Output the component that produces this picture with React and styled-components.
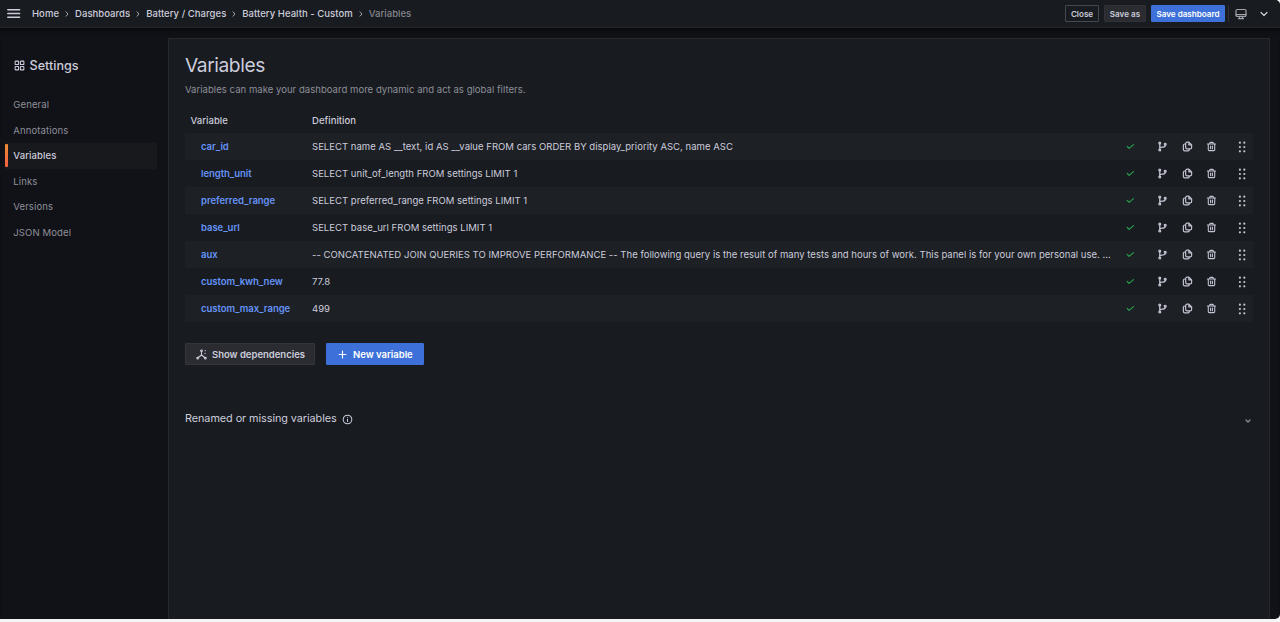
import styled, { createGlobalStyle } from "styled-components";

const GlobalStyle = createGlobalStyle`
  * {
    box-sizing: border-box;
  }
  body {
    margin: 0;
    background: #f4f5f5;
    overflow: hidden;
    font-family: "Inter", sans-serif;
    font-size: 9.52px;
    letter-spacing: 0.004em;
    color: #ccccdc;
  }
`;

const Page = styled.div`
  height: 619px;
  display: flex;
  flex-direction: column;
  overflow: hidden;
  border-radius: 0 5px 5px 0;
  background: #111217;
`;

const TopBar = styled.header`
  height: 28px;
  flex: none;
  display: flex;
  align-items: center;
  padding: 0 10px 0 6px;
  background: #181b1f;
  border-bottom: 1px solid #25272c;
`;

const Icon = styled.svg`
  display: block;
  flex: none;
  width: ${(props) => props.$size || 11}px;
  height: ${(props) => props.$size || 11}px;
  fill: none;
  stroke: currentColor;
  stroke-width: ${(props) => props.$stroke || 2};
  stroke-linecap: round;
  stroke-linejoin: round;
`;

const Crumbs = styled.nav`
  display: flex;
  align-items: center;
  margin-left: 11px;
  font-weight: 500;
  white-space: nowrap;
`;

const Crumb = styled.span`
  display: flex;
  align-items: center;
  color: ${(props) => (props.$current ? "#84858f" : "#ccccdc")};
`;

const Separator = styled(Icon)`
  margin: 1px 4px 0;
  color: #a2a3ae;
`;

const Actions = styled.div`
  display: flex;
  align-items: center;
  margin-left: auto;
`;

const SmallButton = styled.button`
  height: 17px;
  width: ${(props) => props.$width}px;
  margin-right: 5px;
  padding: 0;
  font: 600 8.1px "Inter", sans-serif;
  letter-spacing: 0;
  white-space: nowrap;
  border-radius: 1px;
  color: ${(props) => (props.$kind === "primary" ? "#fff" : "#ccccdc")};
  background: ${(props) =>
    ({ primary: "#3d71d9", secondary: "#2b2c31" })[props.$kind] ||
    "transparent"};
  border: 1px solid
    ${(props) =>
      ({ primary: "#3d71d9", secondary: "#313238" })[props.$kind] || "#46484f"};
`;

const Divider = styled.i`
  width: 1px;
  height: 17px;
  margin: 0 6px 0 -2px;
  background: #2d2f34;
`;

const MonitorIcon = styled(Icon)`
  margin-right: 11px;
  color: #a2a3ae;
`;

const Body = styled.div`
  flex: 1;
  display: flex;
  padding: 10px 10px 0 5px;
  box-shadow: inset 0 5px 5px -3px #08090c;
`;

const Sidebar = styled.aside`
  width: 163px;
  flex: none;
  padding-top: 18px;
`;

const SidebarTitle = styled.h2`
  display: flex;
  align-items: center;
  gap: 5px;
  height: 19px;
  margin: 0 0 17px;
  padding-left: 8.5px;
  font-size: 12.6px;
  font-weight: 500;
  letter-spacing: 0;
`;

const SidebarItem = styled.div`
  display: flex;
  align-items: center;
  height: 25.5px;
  width: 152px;
  font-weight: ${(props) => (props.$active ? 500 : 400)};
  letter-spacing: 0.012em;
  color: ${(props) => (props.$active ? "#ccccdc" : "#8e8f9a")};
  background: ${(props) => (props.$active ? "#18191d" : "none")};

  &::before {
    content: "";
    width: 3px;
    height: 23px;
    margin-right: 5.3px;
    border-radius: 1px;
    background: ${(props) =>
      props.$active ? "linear-gradient(#f08c36, #f55f3e)" : "none"};
  }
`;

const Panel = styled.main`
  flex: 1;
  min-width: 0;
  padding: 13px 16px 0;
  background: #181b1f;
  border: 1px solid #27292d;
  border-bottom: 0;
`;

const Title = styled.h1`
  margin: 0;
  height: 26px;
  font-size: 19.2px;
  line-height: 26px;
  font-weight: 400;
  letter-spacing: -0.022em;
`;

const Subtitle = styled.p`
  margin: 5px 0 10px;
  height: 14px;
  line-height: 14px;
  color: #8e8f9a;
`;

const Row = styled.div`
  display: grid;
  grid-template-columns: 127px 801px 1fr;
  align-items: center;
  height: 27.05px;
  background: ${(props) => (props.$striped ? "#1d2024" : "none")};
`;

const HeaderRow = styled(Row)`
  height: 26px;
  font-weight: 500;
`;

const HeaderCell = styled.span`
  padding-left: ${(props) => props.$indent || 0}px;
`;

const Name = styled.a`
  padding-left: 16px;
  font-weight: 600;
  letter-spacing: -0.004em;
  color: #6593f8;
`;

const Definition = styled.span`
  letter-spacing: 0.0025em;
  white-space: nowrap;
`;

const RowIcons = styled.div`
  display: flex;
  align-items: center;
  gap: 13.5px;
  padding-left: 12px;
  color: #c2c2d1;
`;

const Check = styled(Icon)`
  margin-right: 7.5px;
  color: #2a9d4c;
`;

const Grip = styled(Icon)`
  margin: 1px 0 0 5px;
  fill: currentColor;
  stroke: none;
`;

const ButtonRow = styled.div`
  display: flex;
  gap: 11px;
  margin-top: 21px;
`;

const Button = styled.button`
  display: flex;
  align-items: center;
  gap: 5px;
  height: 22px;
  width: ${(props) => props.$width}px;
  padding: 0 0 0 10px;
  font: 600 9.52px "Inter", sans-serif;
  letter-spacing: -0.002em;
  border-radius: 1px;
  white-space: nowrap;
  color: ${(props) => (props.$primary ? "#fff" : "#ccccdc")};
  background: ${(props) => (props.$primary ? "#3d71d9" : "#2b2c31")};
  border: 1px solid ${(props) => (props.$primary ? "#3d71d9" : "#34353a")};
`;

const Collapse = styled.section`
  display: flex;
  align-items: center;
  gap: 5px;
  margin-top: 44px;
  height: 17px;
  font-size: 10.85px;
  letter-spacing: -0.006em;
`;

const InfoIcon = styled(Icon)`
  margin-top: 3px;
`;

const CollapseIcon = styled(Icon)`
  margin: 7px 1px 0 auto;
  color: #8e8f9a;
`;

const crumbs = [
  "Home",
  "Dashboards",
  "Battery / Charges",
  "Battery Health - Custom",
  "Variables",
];

const sections = [
  "General",
  "Annotations",
  "Variables",
  "Links",
  "Versions",
  "JSON Model",
];

const variables = [
  {
    name: "car_id",
    definition:
      "SELECT name AS __text, id AS __value FROM cars ORDER BY display_priority ASC, name ASC",
  },
  {
    name: "length_unit",
    definition: "SELECT unit_of_length FROM settings LIMIT 1",
  },
  {
    name: "preferred_range",
    definition: "SELECT preferred_range FROM settings LIMIT 1",
  },
  { name: "base_url", definition: "SELECT base_url FROM settings LIMIT 1" },
  {
    name: "aux",
    definition:
      "-- CONCATENATED JOIN QUERIES TO IMPROVE PERFORMANCE -- The following query is the result of many tests and hours of work. This panel is for your own personal use. ...",
  },
  { name: "custom_kwh_new", definition: "77.8" },
  { name: "custom_max_range", definition: "499" },
];

const GripDots = () => (
  <Grip viewBox="0 0 12 12" $size={12}>
    {[1.7, 6, 10.3].map((y) =>
      [3.9, 8.3].map((x) => <circle key={`${x}-${y}`} cx={x} cy={y} r="1.1" />)
    )}
  </Grip>
);

const VariableRow = ({ name, definition, striped }) => (
  <Row $striped={striped}>
    <Name>{name}</Name>
    <Definition>{definition}</Definition>
    <RowIcons>
      <Check viewBox="0 0 24 24" $stroke={2.6}>
        <path d="M5 12l4 4L18.500 8" />
      </Check>
      <Icon viewBox="0 0 24 24" $stroke={2.8}>
        <circle cx="6" cy="4.5" r="2" />
        <circle cx="6" cy="19.5" r="2" />
        <circle cx="18" cy="7" r="2" />
        <path d="M6 6.5v11M18 9c0 4-3 4.5-7 4.5-3 0-5 1-5 4" />
      </Icon>
      <Icon viewBox="0 0 24 24" $stroke={2.6}>
        <path d="M15 2.5h-4a3 3 0 0 0-3 3V14a3 3 0 0 0 3 3h7a3 3 0 0 0 3-3V8.5zM15 2.5v6h6M8 6.5H6a3 3 0 0 0-3 3v9a3 3 0 0 0 3 3h7a3 3 0 0 0 3-3v-1" />
      </Icon>
      <Icon viewBox="0 0 24 24" $stroke={2.4}>
        <path d="M3 6.5h18M8 6V5a2 2 0 0 1 2-2h4a2 2 0 0 1 2 2v1M5 7v12a2 2 0 0 0 2 2h10a2 2 0 0 0 2-2V7M10 11v6M14 11v6" />
      </Icon>
      <GripDots />
    </RowIcons>
  </Row>
);

const App = () => {
  return (
    <Page>
      <GlobalStyle />
      <TopBar>
        <Icon viewBox="0 0 15 15" $size={15} $stroke={1.5}>
          <path d="M1.8 3.8h11.8M1.8 7.5h11.8M1.8 11.2h11.8" />
        </Icon>
        <Crumbs>
          {crumbs.map((crumb, i) => (
            <Crumb key={crumb} $current={i === crumbs.length - 1}>
              {crumb}
              {i < crumbs.length - 1 && (
                <Separator viewBox="0 0 8 8" $size={8} $stroke={1}>
                  <path d="M3 1.8l2 2.2-2 2.2" />
                </Separator>
              )}
            </Crumb>
          ))}
        </Crumbs>
        <Actions>
          <SmallButton $width={34}>Close</SmallButton>
          <SmallButton $kind="secondary" $width={42}>
            Save as
          </SmallButton>
          <SmallButton $kind="primary" $width={74}>
            Save dashboard
          </SmallButton>
          <Divider />
          <MonitorIcon viewBox="0 0 12 12" $size={12} $stroke={1.2}>
            <rect x="1" y="1.5" width="10" height="7" rx="1.3" />
            <path d="M1 6.7h10M4.5 8.5v2M7.5 8.5v2M3.5 10.7h5" />
          </MonitorIcon>
          <Icon viewBox="0 0 12 12" $size={12} $stroke={1.2}>
            <path d="M3 4.5l3 3 3-3" />
          </Icon>
        </Actions>
      </TopBar>
      <Body>
        <Sidebar>
          <SidebarTitle>
            <Icon viewBox="0 0 24 24" $stroke={2.3}>
              <rect x="2.5" y="2.5" width="7.5" height="7.5" rx="1" />
              <rect x="14" y="2.5" width="7.5" height="7.5" rx="1" />
              <rect x="2.5" y="14" width="7.5" height="7.5" rx="1" />
              <rect x="14" y="14" width="7.5" height="7.5" rx="1" />
            </Icon>
            Settings
          </SidebarTitle>
          {sections.map((section) => (
            <SidebarItem key={section} $active={section === "Variables"}>
              {section}
            </SidebarItem>
          ))}
        </Sidebar>
        <Panel>
          <Title>Variables</Title>
          <Subtitle>
            Variables can make your dashboard more dynamic and act as global
            filters.
          </Subtitle>
          <HeaderRow>
            <HeaderCell $indent={5.5}>Variable</HeaderCell>
            <HeaderCell>Definition</HeaderCell>
          </HeaderRow>
          {variables.map((variable, i) => (
            <VariableRow
              key={variable.name}
              {...variable}
              striped={i % 2 === 0}
            />
          ))}
          <ButtonRow>
            <Button $width={130}>
              <Icon viewBox="0 0 12 12" $stroke={1.2}>
                <circle cx="6" cy="2" r="0.9" />
                <circle cx="1.8" cy="10" r="0.9" />
                <circle cx="10.2" cy="10" r="0.9" />
                <path d="M6 3v3.5M6 6.5L2.5 9.3M6 6.5l3.5 2.8M10 1.8h.1M9.8 4.8h.1" />
              </Icon>
              Show dependencies
            </Button>
            <Button $primary $width={98}>
              <Icon viewBox="0 0 12 12" $stroke={1.2}>
                <path d="M6 2.3v7.4M2.3 6h7.4" />
              </Icon>
              New variable
            </Button>
          </ButtonRow>
          <Collapse>
            Renamed or missing variables
            <InfoIcon viewBox="0 0 12 12" $size={11} $stroke={1.1}>
              <circle cx="6" cy="6" r="4.7" />
              <path d="M6 5.7v2.6M6 3.7v.1" />
            </InfoIcon>
            <CollapseIcon viewBox="0 0 8 8" $size={8} $stroke={1.2}>
              <path d="M2 3l2 2 2-2" />
            </CollapseIcon>
          </Collapse>
        </Panel>
      </Body>
    </Page>
  );
};

export default App;
